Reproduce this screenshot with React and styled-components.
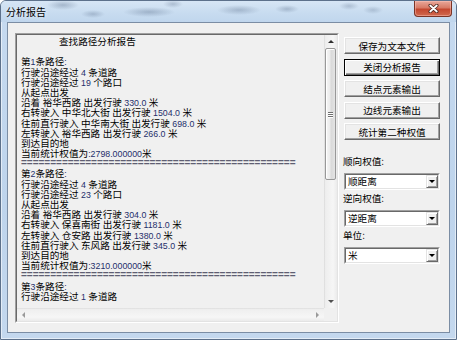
import React from 'react';
import styled, { createGlobalStyle, css } from 'styled-components';

const Global = createGlobalStyle`
  html, body { margin: 0; padding: 0; background: #ffffff; }
  body { font-family: "Noto Sans CJK SC", "Liberation Sans", sans-serif; }
`;

const Window = styled.div`
  width: 457px;
  height: 340px;
  box-sizing: border-box;
  display: flex;
  flex-direction: column;
  border: 1px solid #5d718b;
  border-radius: 6px 6px 0 0;
  overflow: hidden;
  background: linear-gradient(180deg, #c6daf0 0%, #bed4ec 60%, #c4d8ee 100%);
  box-shadow: inset 0 0 0 1px rgba(255, 255, 255, 0.55);
`;

const TitleBar = styled.div`
  height: 21px;
  flex: none;
  display: flex;
  align-items: flex-start;
  justify-content: space-between;
  padding: 0 4px 0 5px;
  background:
    radial-gradient(ellipse 16px 5px at 62px 4px, rgba(70, 90, 120, 0.32), transparent),
    radial-gradient(ellipse 12px 4px at 92px 13px, rgba(70, 90, 120, 0.28), transparent),
    radial-gradient(ellipse 26px 5px at 148px 11px, rgba(70, 90, 120, 0.32), transparent),
    radial-gradient(ellipse 10px 4px at 172px 3px, rgba(70, 90, 120, 0.28), transparent),
    radial-gradient(ellipse 22px 5px at 238px 9px, rgba(70, 90, 120, 0.3), transparent),
    radial-gradient(ellipse 12px 4px at 286px 8px, rgba(70, 90, 120, 0.3), transparent),
    radial-gradient(ellipse 10px 4px at 348px 5px, rgba(70, 90, 120, 0.26), transparent),
    radial-gradient(ellipse 10px 4px at 372px 9px, rgba(70, 90, 120, 0.24), transparent),
    linear-gradient(180deg, #d7e6f5 0%, #c8dcf0 55%, #c0d6ed 100%);
`;

const TitleText = styled.div`
  padding-top: 5px;
  font-size: 10px;
  line-height: 12px;
  color: #000;
  text-shadow: 0 0 4px rgba(255, 255, 255, 0.9);
`;

const CloseBtn = styled.div`
  width: 38px;
  height: 16px;
  box-sizing: border-box;
  display: flex;
  align-items: center;
  justify-content: center;
  border: 1px solid #7a3426;
  border-top: none;
  border-radius: 0 0 4px 4px;
  background: linear-gradient(180deg, #e9a89a 0%, #d77a66 45%, #c4472f 55%, #d06a4f 100%);
  box-shadow: inset 0 0 0 1px rgba(255, 200, 190, 0.45);
`;

const FrameBody = styled.div`
  flex: 1;
  display: flex;
  padding: 0 6px 6px 6px;
  min-height: 0;
`;

const Client = styled.div`
  flex: 1;
  display: flex;
  align-items: flex-start;
  background: #f0f0f0;
  border: 1px solid #7b8da4;
  padding: 10px 9px 9px 7px;
`;

const EditOuter = styled.div`
  width: 324px;
  height: 290px;
  box-sizing: border-box;
  flex: none;
  border: 1px solid;
  border-color: #a0a0a0 #ffffff #ffffff #a0a0a0;
  display: flex;
`;

const EditInner = styled.div`
  flex: 1;
  border: 1px solid;
  border-color: #696969 #e3e3e3 #e3e3e3 #696969;
  display: grid;
  grid-template-columns: 1fr 13px;
  grid-template-rows: 1fr 13px;
  min-width: 0;
  min-height: 0;
`;

const TextArea = styled.div`
  overflow: hidden;
  padding: 1px 0 0 4px;
  font-family: "Noto Sans CJK SC", sans-serif;
  font-size: 9.6px;
  color: #000;
  background: #f0f0f0;
`;

const Line = styled.div`
  height: 10.2px;
  line-height: 10.2px;
  white-space: pre;
  ${p => p.$indent && css`padding-left: 38px;`}
`;

const Latin = styled.span`
  font-family: "Liberation Sans", sans-serif;
  font-size: 8.8px;
  color: #1f2f6b;
`;

const Sep = styled.div`
  height: 10.2px;
  line-height: 10.2px;
  white-space: pre;
  font-family: "Liberation Sans", sans-serif;
  font-weight: bold;
  font-size: 10px;
  color: #5e5e72;
`;

const VScroll = styled.div`
  display: flex;
  flex-direction: column;
  background: linear-gradient(90deg, #d9d9d9 0, #eeeeee 12%, #f6f6f6 70%, #ebebeb 100%);
`;

const HScroll = styled.div`
  display: flex;
  background: linear-gradient(180deg, #dcdcdc 0, #efefef 12%, #f6f6f6 70%, #ebebeb 100%);
`;

const Corner = styled.div`
  background: #f0f0f0;
`;

const ArrowCell = styled.div`
  width: 13px;
  height: 13px;
  flex: none;
  display: flex;
  align-items: center;
  justify-content: center;
`;

const Tri = styled.div`
  width: 0;
  height: 0;
  ${p => p.$dir === 'up' && css`
    border-left: 3px solid transparent;
    border-right: 3px solid transparent;
    border-bottom: 3px solid ${p.$c};
  `}
  ${p => p.$dir === 'down' && css`
    border-left: 3px solid transparent;
    border-right: 3px solid transparent;
    border-top: 3px solid ${p.$c};
  `}
  ${p => p.$dir === 'left' && css`
    border-top: 3px solid transparent;
    border-bottom: 3px solid transparent;
    border-right: 3px solid ${p.$c};
  `}
  ${p => p.$dir === 'right' && css`
    border-top: 3px solid transparent;
    border-bottom: 3px solid transparent;
    border-left: 3px solid ${p.$c};
  `}
`;

const Thumb = styled.div`
  height: 132px;
  margin: 0 1px;
  box-sizing: border-box;
  border: 1px solid #989898;
  border-radius: 2px;
  background: linear-gradient(90deg, #f6f6f6 0%, #ebebeb 45%, #d9d9d9 55%, #e4e4e4 100%);
  box-shadow: inset 1px 1px 0 #ffffff;
  display: flex;
  flex-direction: column;
  align-items: center;
  justify-content: center;
  gap: 1px;
`;

const Grip = styled.div`
  width: 5px;
  height: 1px;
  background: #6f6f6f;
  box-shadow: 0 1px 0 #ffffff;
`;

const Spacer = styled.div`
  flex: 1;
`;

const Side = styled.div`
  width: 96px;
  flex: none;
  margin-left: 5px;
  margin-top: 4px;
  display: flex;
  flex-direction: column;
`;

const Buttons = styled.div`
  display: flex;
  flex-direction: column;
  gap: 4.5px;
`;

const Btn = styled.div`
  height: 17px;
  box-sizing: border-box;
  display: flex;
  align-items: center;
  justify-content: center;
  background: #f0f0f0;
  border: 1px solid;
  border-color: #ffffff #696969 #696969 #ffffff;
  box-shadow: inset -1px -1px 0 #a0a0a0, inset 1px 1px 0 #e3e3e3;
  font-size: 9.6px;
  color: #000;
  ${p => p.$default && css`
    border-color: #000000;
    box-shadow: inset 1px 1px 0 #ffffff, inset -1px -1px 0 #696969, inset -2px -2px 0 #a0a0a0;
  `}
`;

const Label = styled.div`
  height: 12px;
  line-height: 12px;
  font-size: 9.6px;
  color: #000;
  margin: ${p => (p.$first ? '15px' : '2px')} 0 6px -1px;
`;

const Combo = styled.div`
  height: 17px;
  box-sizing: border-box;
  border: 1px solid;
  border-color: #a0a0a0 #ffffff #ffffff #a0a0a0;
  display: flex;
`;

const ComboInner = styled.div`
  flex: 1;
  display: flex;
  align-items: stretch;
  background: #ffffff;
  border: 1px solid;
  border-color: #696969 #e3e3e3 #e3e3e3 #696969;
`;

const ComboText = styled.div`
  flex: 1;
  padding-left: 2px;
  font-size: 9.6px;
  line-height: 13px;
  color: #000;
`;

const DropBtn = styled.div`
  width: 12px;
  flex: none;
  box-sizing: border-box;
  display: flex;
  align-items: center;
  justify-content: center;
  background: #f0f0f0;
  border: 1px solid;
  border-color: #e3e3e3 #696969 #696969 #e3e3e3;
  box-shadow: inset 1px 1px 0 #ffffff, inset -1px -1px 0 #a0a0a0;
`;

const DropTri = styled.div`
  width: 0;
  height: 0;
  border-left: 3px solid transparent;
  border-right: 3px solid transparent;
  border-top: 3px solid #000;
`;

const SEP = '='.repeat(47);

const lines = [
  { t: '查找路径分析报告', indent: true },
  { t: '' },
  { t: '第1条路径:' },
  { t: '行驶沿途经过 4 条道路' },
  { t: '行驶沿途经过 19 个路口' },
  { t: '从起点出发' },
  { t: '沿着 裕华西路 出发行驶 330.0 米' },
  { t: '右转驶入 中华北大街 出发行驶 1504.0 米' },
  { t: '往前直行驶入 中华南大街 出发行驶 698.0 米' },
  { t: '左转驶入 裕华西路 出发行驶 266.0 米' },
  { t: '到达目的地' },
  { t: '当前统计权值为:2798.000000米' },
  { sep: true },
  { t: '第2条路径:' },
  { t: '行驶沿途经过 4 条道路' },
  { t: '行驶沿途经过 23 个路口' },
  { t: '从起点出发' },
  { t: '沿着 裕华西路 出发行驶 304.0 米' },
  { t: '右转驶入 保喜南街 出发行驶 1181.0 米' },
  { t: '左转驶入 仓安路 出发行驶 1380.0 米' },
  { t: '往前直行驶入 东风路 出发行驶 345.0 米' },
  { t: '到达目的地' },
  { t: '当前统计权值为:3210.000000米' },
  { sep: true },
  { t: '第3条路径:' },
  { t: '行驶沿途经过 1 条道路' },
];

const renderRuns = s =>
  s
    .split(/([\x20-\x7e]+)/)
    .filter(Boolean)
    .map((seg, i) =>
      /[\x20-\x7e]/.test(seg[0]) ? <Latin key={i}>{seg}</Latin> : <span key={i}>{seg}</span>
    );

const buttons = ['保存为文本文件', '关闭分析报告', '结点元素输出', '边线元素输出', '统计第二种权值'];

const combos = [
  { label: '顺向权值:', value: '顺距离' },
  { label: '逆向权值:', value: '逆距离' },
  { label: '单位:', value: '米' },
];

export default function App() {
  return (
    <>
      <Global />
      <Window>
        <TitleBar>
          <TitleText>分析报告</TitleText>
          <CloseBtn>
            <svg width="11" height="9" viewBox="0 0 11 9">
              <path d="M2.2 1.5 L8.8 7.5 M8.8 1.5 L2.2 7.5" stroke="#4a2620" strokeWidth="3.4" strokeLinecap="round" />
              <path d="M2.2 1.5 L8.8 7.5 M8.8 1.5 L2.2 7.5" stroke="#ffffff" strokeWidth="1.8" strokeLinecap="round" />
            </svg>
          </CloseBtn>
        </TitleBar>
        <FrameBody>
          <Client>
            <EditOuter>
              <EditInner>
                <TextArea>
                  {lines.map((l, i) =>
                    l.sep ? (
                      <Sep key={i}>{SEP}</Sep>
                    ) : (
                      <Line key={i} $indent={l.indent}>
                        {renderRuns(l.t)}
                      </Line>
                    )
                  )}
                </TextArea>
                <VScroll>
                  <ArrowCell>
                    <Tri $dir="up" $c="#303030" />
                  </ArrowCell>
                  <Thumb>
                    <Grip />
                    <Grip />
                    <Grip />
                  </Thumb>
                  <Spacer />
                  <ArrowCell>
                    <Tri $dir="down" $c="#505050" />
                  </ArrowCell>
                </VScroll>
                <HScroll>
                  <ArrowCell>
                    <Tri $dir="left" $c="#9a9a9a" />
                  </ArrowCell>
                  <Spacer />
                  <ArrowCell>
                    <Tri $dir="right" $c="#9a9a9a" />
                  </ArrowCell>
                </HScroll>
                <Corner />
              </EditInner>
            </EditOuter>
            <Side>
              <Buttons>
                {buttons.map((b, i) => (
                  <Btn key={b} $default={i === 1}>
                    {b}
                  </Btn>
                ))}
              </Buttons>
              {combos.map((c, i) => (
                <React.Fragment key={c.label}>
                  <Label $first={i === 0}>{c.label}</Label>
                  <Combo>
                    <ComboInner>
                      <ComboText>{c.value}</ComboText>
                      <DropBtn>
                        <DropTri />
                      </DropBtn>
                    </ComboInner>
                  </Combo>
                </React.Fragment>
              ))}
            </Side>
          </Client>
        </FrameBody>
      </Window>
    </>
  );
}
